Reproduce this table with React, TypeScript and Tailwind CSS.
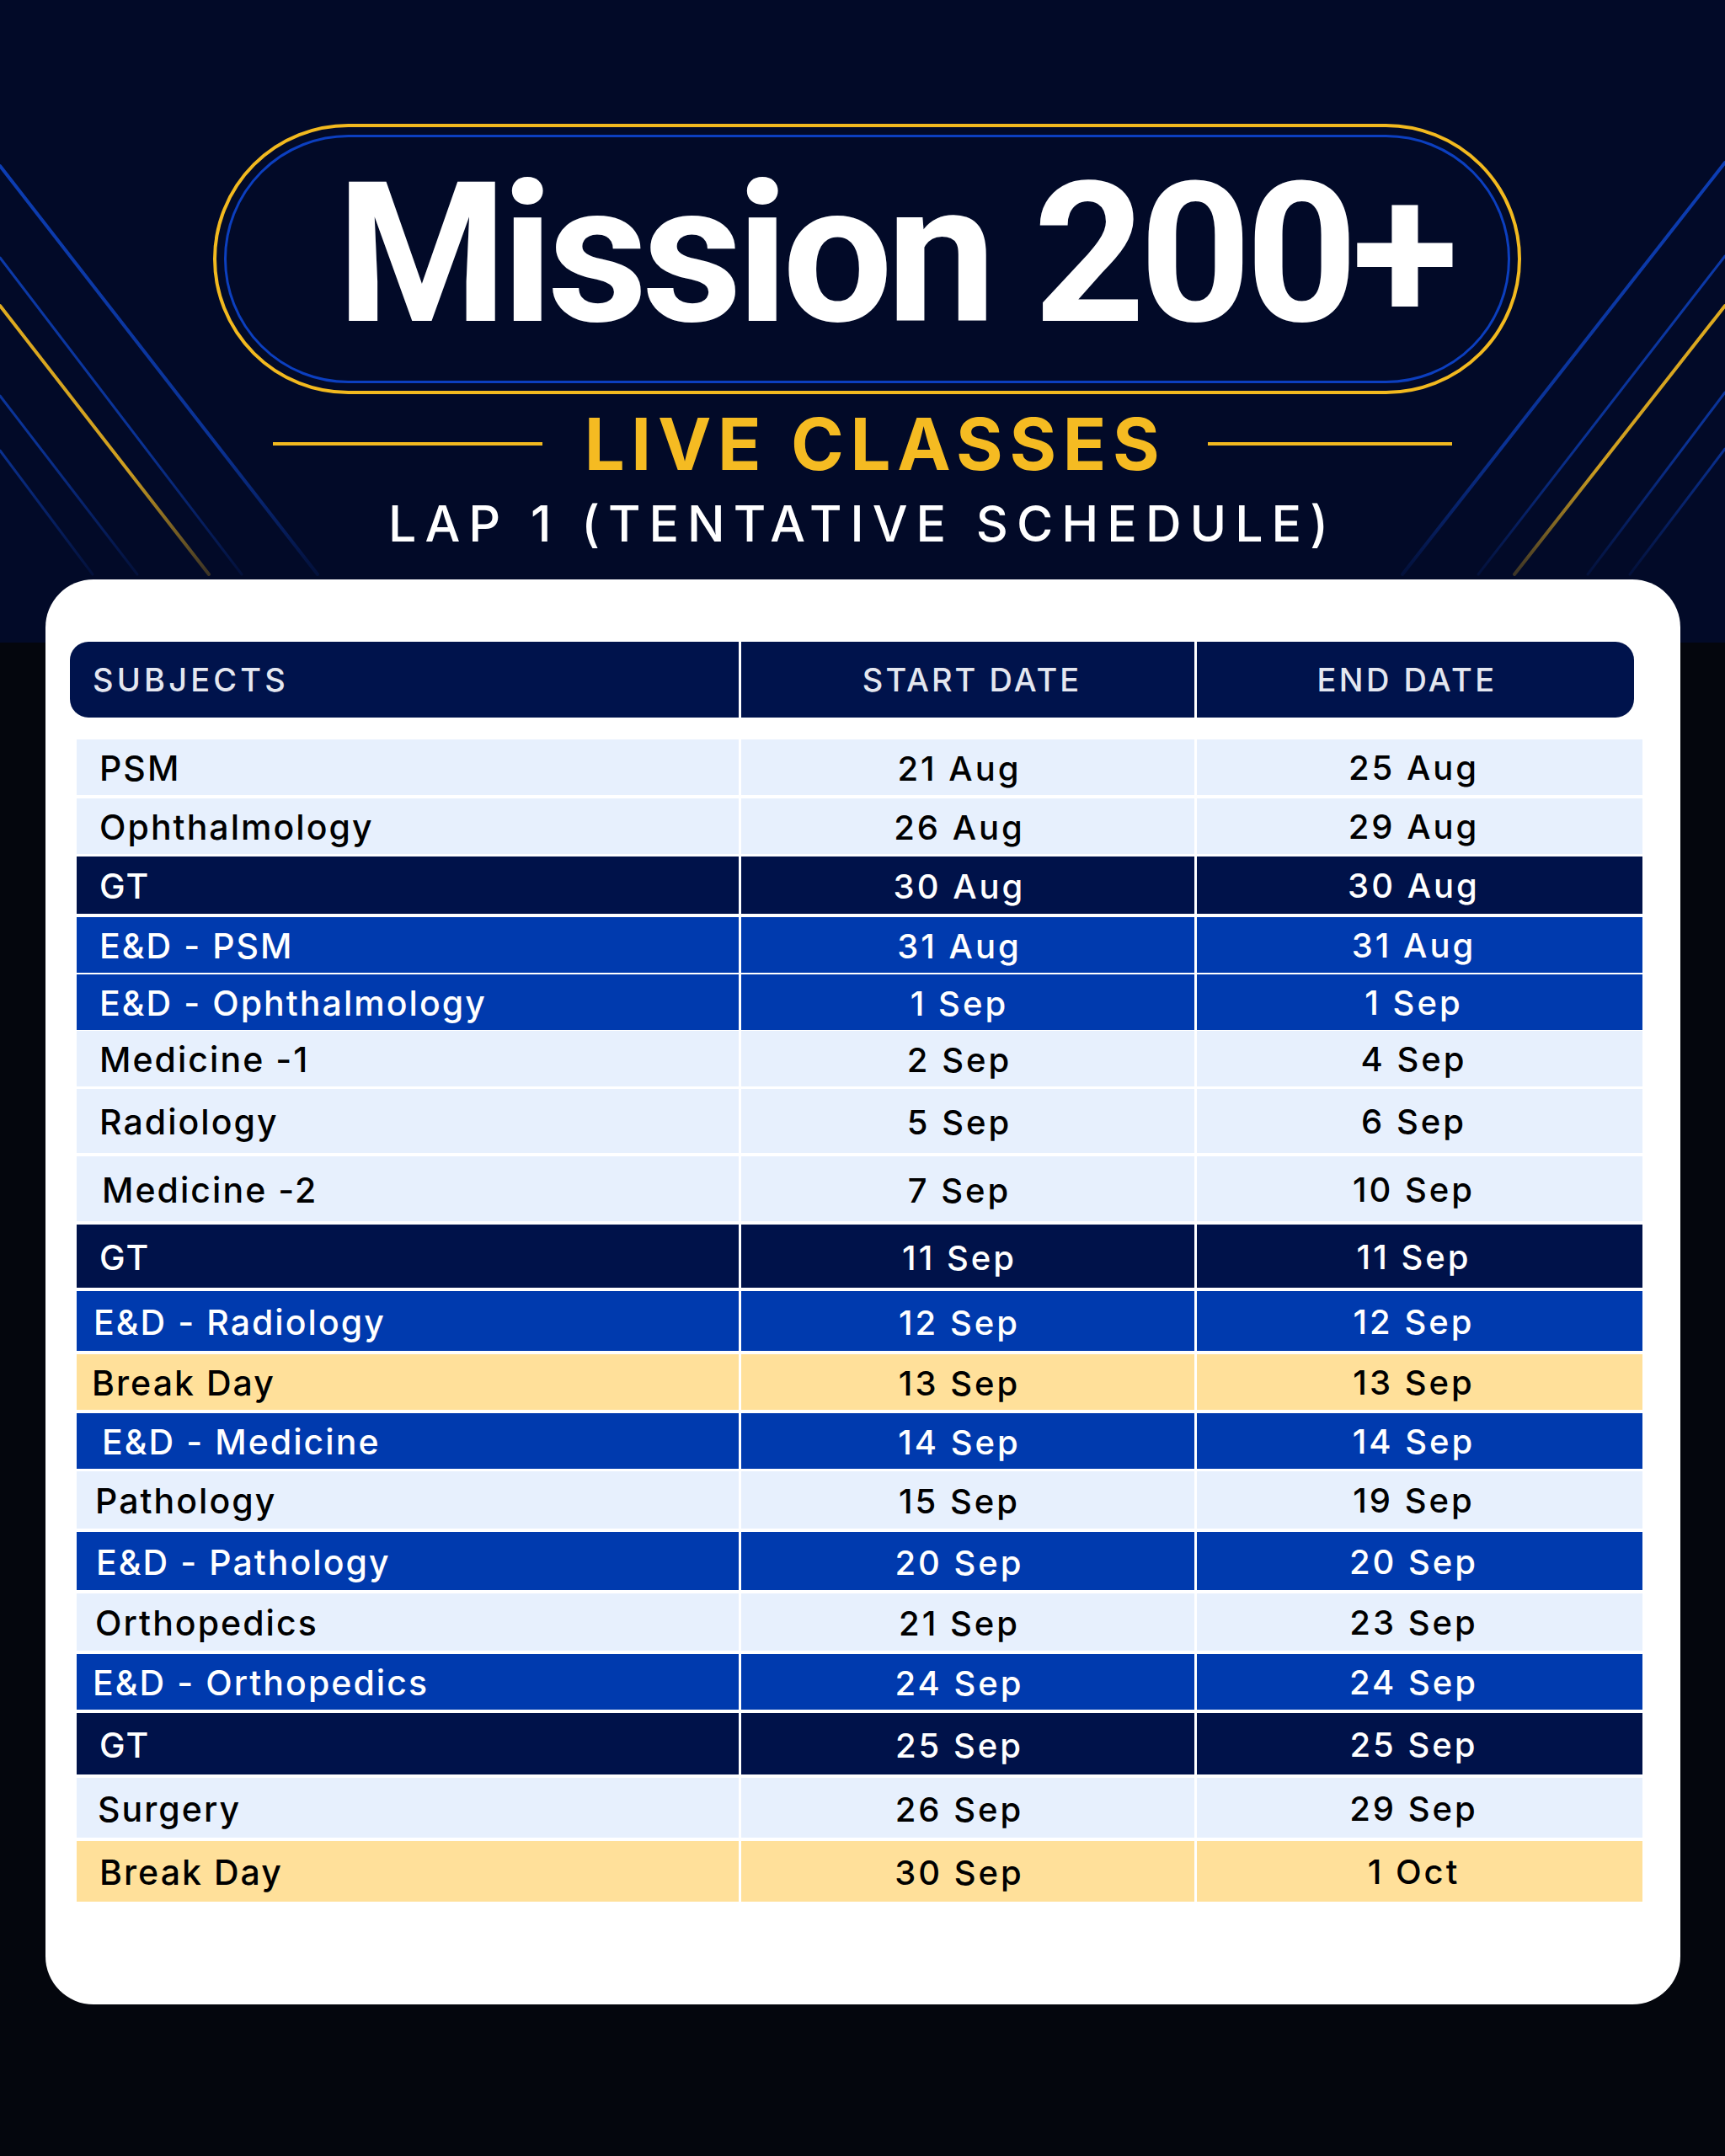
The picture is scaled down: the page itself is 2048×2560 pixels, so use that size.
import React from 'react';

type Tone = 'light' | 'dark' | 'blue' | 'yellow';

interface Row {
  subject: string;
  start: string;
  end: string;
  tone: Tone;
  h: string;
  pl: string;
  navy?: boolean;
}

const rows: Row[] = [
  { subject: 'PSM', start: '21 Aug', end: '25 Aug', tone: 'light', h: 'h-[66px]', pl: 'pl-[27px]', navy: true },
  { subject: 'Ophthalmology', start: '26 Aug', end: '29 Aug', tone: 'light', h: 'h-[65px]', pl: 'pl-[27px]', navy: true },
  { subject: 'GT', start: '30 Aug', end: '30 Aug', tone: 'dark', h: 'h-[68px]', pl: 'pl-[27px]' },
  { subject: 'E&D - PSM', start: '31 Aug', end: '31 Aug', tone: 'blue', h: 'h-[64px]', pl: 'pl-[27px]' },
  { subject: 'E&D - Ophthalmology', start: '1 Sep', end: '1 Sep', tone: 'blue', h: 'h-[63px]', pl: 'pl-[27px]' },
  { subject: 'Medicine -1', start: '2 Sep', end: '4 Sep', tone: 'light', h: 'h-[65px]', pl: 'pl-[27px]' },
  { subject: 'Radiology', start: '5 Sep', end: '6 Sep', tone: 'light', h: 'h-[76px]', pl: 'pl-[27px]' },
  { subject: 'Medicine -2', start: '7 Sep', end: '10 Sep', tone: 'light', h: 'h-[77px]', pl: 'pl-[30px]' },
  { subject: 'GT', start: '11 Sep', end: '11 Sep', tone: 'dark', h: 'h-[75px]', pl: 'pl-[27px]' },
  { subject: 'E&D - Radiology', start: '12 Sep', end: '12 Sep', tone: 'blue', h: 'h-[71px]', pl: 'pl-[20px]' },
  { subject: 'Break Day', start: '13 Sep', end: '13 Sep', tone: 'yellow', h: 'h-[66px]', pl: 'pl-[18px]' },
  { subject: 'E&D - Medicine', start: '14 Sep', end: '14 Sep', tone: 'blue', h: 'h-[65px]', pl: 'pl-[30px]' },
  { subject: 'Pathology', start: '15 Sep', end: '19 Sep', tone: 'light', h: 'h-[68px]', pl: 'pl-[22px]' },
  { subject: 'E&D - Pathology', start: '20 Sep', end: '20 Sep', tone: 'blue', h: 'h-[69px]', pl: 'pl-[23px]' },
  { subject: 'Orthopedics', start: '21 Sep', end: '23 Sep', tone: 'light', h: 'h-[68px]', pl: 'pl-[22px]' },
  { subject: 'E&D - Orthopedics', start: '24 Sep', end: '24 Sep', tone: 'blue', h: 'h-[66px]', pl: 'pl-[19px]' },
  { subject: 'GT', start: '25 Sep', end: '25 Sep', tone: 'dark', h: 'h-[73px]', pl: 'pl-[27px]' },
  { subject: 'Surgery', start: '26 Sep', end: '29 Sep', tone: 'light', h: 'h-[71px]', pl: 'pl-[25px]' },
  { subject: 'Break Day', start: '30 Sep', end: '1 Oct', tone: 'yellow', h: 'h-[72px]', pl: 'pl-[27px]' },
];

const toneClass: Record<Tone, string> = {
  light: 'bg-[#e7f0fd] text-black',
  dark: 'bg-[#00124a] text-white',
  blue: 'bg-[#003aae] text-white',
  yellow: 'bg-[#ffe09a] text-black',
};

// diagonal stripes behind the banner
const BannerLines = () => (
  <svg className="absolute left-0 top-0 pointer-events-none" width="2048" height="763" viewBox="0 0 2048 763">
    <defs>
      <linearGradient id="fadeBlue" x1="0" y1="150" x2="0" y2="690" gradientUnits="userSpaceOnUse">
        <stop offset="0" stopColor="#0d3fb8" stopOpacity="1" />
        <stop offset="0.7" stopColor="#0d3fb8" stopOpacity="0.75" />
        <stop offset="1" stopColor="#0d3fb8" stopOpacity="0.1" />
      </linearGradient>
      <linearGradient id="fadeGold" x1="0" y1="150" x2="0" y2="690" gradientUnits="userSpaceOnUse">
        <stop offset="0" stopColor="#f2b91f" stopOpacity="1" />
        <stop offset="0.75" stopColor="#f2b91f" stopOpacity="0.85" />
        <stop offset="1" stopColor="#f2b91f" stopOpacity="0.2" />
      </linearGradient>
    </defs>
    <g fill="none" strokeLinecap="round">
      <line x1="0" y1="197" x2="377" y2="682" stroke="url(#fadeBlue)" strokeWidth="4" />
      <line x1="0" y1="306" x2="287" y2="682" stroke="url(#fadeBlue)" strokeWidth="3" />
      <line x1="0" y1="363" x2="248" y2="682" stroke="url(#fadeGold)" strokeWidth="4" />
      <line x1="0" y1="470" x2="163" y2="682" stroke="url(#fadeBlue)" strokeWidth="3" />
      <line x1="0" y1="535" x2="110" y2="682" stroke="url(#fadeBlue)" strokeWidth="3" />

      <line x1="2048" y1="193" x2="1665" y2="682" stroke="url(#fadeBlue)" strokeWidth="4" />
      <line x1="2048" y1="304" x2="1755" y2="682" stroke="url(#fadeBlue)" strokeWidth="3" />
      <line x1="2048" y1="363" x2="1798" y2="682" stroke="url(#fadeGold)" strokeWidth="4" />
      <line x1="2048" y1="466" x2="1885" y2="682" stroke="url(#fadeBlue)" strokeWidth="3" />
      <line x1="2048" y1="533" x2="1935" y2="682" stroke="url(#fadeBlue)" strokeWidth="3" />
    </g>
  </svg>
);

export default function App() {
  return (
    <div className="relative w-[2048px] h-[2560px] overflow-hidden bg-[linear-gradient(to_bottom,#020a28_763px,#04060d_763px)] font-['Inter',sans-serif]">
      <BannerLines />

      <div className="relative flex flex-col items-center pt-[147px]">
        {/* title pill */}
        <div className="ml-[10px] w-[1553px] h-[321px] rounded-full border-[4px] border-[#f2b91f] p-[9px]">
          <div className="w-full h-full rounded-full border-[3px] border-[#0c3fbf] flex items-center justify-center pl-[66px]">
            <h1 className="mb-[12px] whitespace-nowrap font-['Roboto',sans-serif] text-[232px] leading-none font-bold tracking-[-0.03em] text-white">
              Mission 200+
            </h1>
          </div>
        </div>

        <div className="mt-[14px] h-[90px] flex items-center justify-center gap-[50px]">
          <div className="w-[320px] h-[4px] bg-[#f2b91f]" />
          <span className="whitespace-nowrap text-[85px] leading-none font-bold tracking-[0.09em] text-[#f5bb22]">LIVE CLASSES</span>
          <div className="w-[290px] h-[4px] bg-[#f2b91f]" />
        </div>

        <div className="h-[100px] leading-[100px] whitespace-nowrap text-[59px] font-medium tracking-[0.17em] text-white">
          LAP 1 (TENTATIVE SCHEDULE)
        </div>
      </div>

      {/* schedule card */}
      <div className="relative mt-[16px] ml-[54px] w-[1941px] h-[1692px] rounded-[57px] bg-white pt-[74px] pl-[29px]">
        <div className="w-[1857px] h-[90px] rounded-[22px] overflow-hidden bg-white grid grid-cols-[794px_538px_519px] gap-x-[3px]">
          <div className="bg-[#00134c] flex items-center pl-[27px] text-[38px] font-medium tracking-[0.11em] text-[#e4e7f0]">SUBJECTS</div>
          <div className="bg-[#00134c] flex items-center justify-center pl-[10px] text-[38px] font-medium tracking-[0.08em] text-[#e4e7f0]">START DATE</div>
          <div className="bg-[#00134c] flex items-center justify-center pr-[20px] text-[38px] font-medium tracking-[0.09em] text-[#e4e7f0]">END DATE</div>
        </div>

        <div className="mt-[26px] ml-[8px] flex flex-col gap-y-[4px]">
          {rows.map((row, i) => (
            <div key={i} className={`grid grid-cols-[786px_538px_529px] gap-x-[3px] ${row.h}`}>
              <div className={`flex items-center ${row.pl} ${toneClass[row.tone]} ${row.navy ? 'text-[#1d2a5c]' : ''}`}>
                <span className="text-[41px] font-medium tracking-[0.05em] pt-[4px] whitespace-nowrap">{row.subject}</span>
              </div>
              <div className={`flex items-center justify-center pr-[20px] ${toneClass[row.tone]} ${row.navy && i === 0 ? 'text-[#1d2a5c]' : ''}`}>
                <span className="text-[40px] font-medium tracking-[0.075em] pt-[4px]">{row.start}</span>
              </div>
              <div className={`flex items-center justify-center pr-[14px] ${toneClass[row.tone]} ${row.navy && i === 0 ? 'text-[#1d2a5c]' : ''}`}>
                <span className="text-[40px] font-medium tracking-[0.075em] pt-[2px]">{row.end}</span>
              </div>
            </div>
          ))}
        </div>
      </div>
    </div>
  );
}
